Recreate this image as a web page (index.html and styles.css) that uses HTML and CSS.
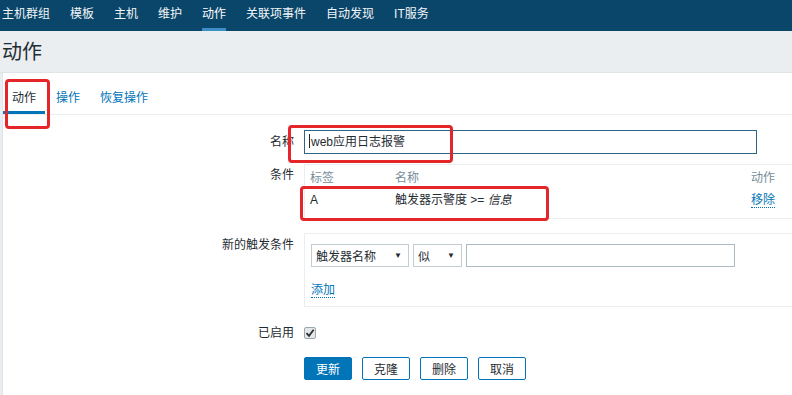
FILE: index.html
```html
<!DOCTYPE html>
<html lang="zh-CN">
<head>
    <meta charset="UTF-8">
    <meta name="viewport" content="width=device-width, initial-scale=1.0">
    <title>动作</title>
    <link rel="stylesheet" href="styles.css">
</head>
<body>

<!-- Sub navigation -->
<div class="subnav">
    <a href="#">主机群组</a>
    <a href="#">模板</a>
    <a href="#">主机</a>
    <a href="#">维护</a>
    <a href="#" class="active">动作</a>
    <a href="#">关联项事件</a>
    <a href="#">自动发现</a>
    <a href="#">IT服务</a>
</div>

<div class="header">
    <h1>动作</h1>
</div>

<div class="content">
    <div class="tabs">
        <a href="#" class="tab active">动作</a>
        <a href="#" class="tab">操作</a>
        <a href="#" class="tab">恢复操作</a>
    </div>

    <div class="form">
        <div class="form-row row-name">
            <label class="form-label">名称</label>
            <div class="form-field">
                <div class="text-input focused"><span class="caret"></span>web应用日志报警</div>
            </div>
        </div>

        <div class="form-row row-conditions">
            <label class="form-label">条件</label>
            <div class="form-field">
                <div class="box wide">
                    <table class="cond-table">
                        <thead>
                            <tr>
                                <th class="col-tag">标签</th>
                                <th>名称</th>
                                <th class="col-action">动作</th>
                            </tr>
                        </thead>
                        <tbody>
                            <tr>
                                <td>A</td>
                                <td>触发器示警度 &gt;= <em>信息</em></td>
                                <td><a href="#" class="link">移除</a></td>
                            </tr>
                        </tbody>
                    </table>
                </div>
            </div>
        </div>

        <div class="form-row row-new">
            <label class="form-label">新的触发条件</label>
            <div class="form-field">
                <div class="box wide new-box">
                    <div class="controls">
                        <div class="select select-type">触发器名称<span class="arrow">&#9660;</span></div>
                        <div class="select select-op">似<span class="arrow">&#9660;</span></div>
                        <div class="text-input value-input"></div>
                    </div>
                    <a href="#" class="link add-link">添加</a>
                </div>
            </div>
        </div>

        <div class="form-row row-enabled">
            <label class="form-label">已启用</label>
            <div class="form-field">
                <span class="checkbox">
                    <svg width="10" height="10" viewBox="0 0 10 10"><path d="M1.5 5.2 L4 7.8 L8.6 1.8" fill="none" stroke="#2b2f33" stroke-width="1.8"/></svg>
                </span>
            </div>
        </div>

        <div class="form-row row-buttons">
            <span class="form-label"></span>
            <div class="form-field buttons">
                <button class="btn primary">更新</button>
                <button class="btn">克隆</button>
                <button class="btn">删除</button>
                <button class="btn">取消</button>
            </div>
        </div>
    </div>
</div>

<!-- red annotation marks over the screenshot -->
<div class="mark mark-tab"></div>
<div class="mark mark-name"></div>
<div class="mark mark-cond"></div>

</body>
</html>
```

FILE: styles.css
```css
html, body {
    margin: 0;
    overflow: hidden;
}

body {
    font-family: "Liberation Sans", "Noto Sans CJK SC", sans-serif;
    font-size: 12px;
    color: #1f2c33;
    background-color: #ebeef0;
    position: relative;
    height: 395px;
}

a {
    text-decoration: none;
}

/* Sub navigation */
.subnav {
    display: flex;
    gap: 20px;
    height: 31px;
    padding-left: 2px;
    background-color: #0a466a;
}

.subnav a {
    color: #f2f6f8;
    line-height: 28px;
    border-bottom: 3px solid transparent;
}

.subnav a.active {
    color: #ffffff;
    border-bottom-color: #3b8ec6;
}

/* Page title */
.header {
    height: 41px;
    padding-left: 2px;
    border-bottom: 1px solid #dfe4e7;
}

.header h1 {
    margin: 0;
    font-size: 20px;
    font-weight: normal;
    line-height: 42px;
    color: #1f2c33;
}

/* White content block */
.content {
    margin-left: 2px;
    border-left: 1px solid #dfe4e7;
    background-color: #ffffff;
    height: 322px;
    overflow: hidden;
}

.tabs {
    display: flex;
    height: 41px;
    border-bottom: 1px solid #ebeef0;
}

.tab {
    padding: 17px 9px 5px;
    margin-right: 2px;
    line-height: 16px;
    color: #0275b8;
    border-bottom: 3px solid transparent;
}

.tab.active {
    color: #1f2c33;
    border-bottom-color: #0275b8;
}

/* Form */
.form {
    padding-top: 15px;
}

.form-row {
    display: grid;
    grid-template-columns: 291px 1fr;
    column-gap: 10px;
}

.form-label {
    text-align: right;
    line-height: 14px;
}

.row-name .form-label {
    line-height: 24px;
}

.row-conditions {
    margin-top: 10px;
}

.row-conditions .form-label {
    padding-top: 4px;
}

.row-new {
    margin-top: 14px;
}

.row-new .form-label {
    padding-top: 5px;
}

.row-enabled {
    margin-top: 20px;
}

.row-enabled .form-label {
    line-height: 12px;
}

.row-buttons {
    margin-top: 18px;
}

.text-input {
    box-sizing: border-box;
    height: 24px;
    border: 1px solid #acbbc2;
    background: #ffffff;
    line-height: 22px;
    padding-left: 4px;
}

.text-input.focused {
    width: 453px;
    border-color: #2f6587;
}

.caret {
    display: inline-block;
    width: 1px;
    height: 14px;
    margin-right: 1px;
    vertical-align: -2px;
    background: #1f2c33;
}

.box {
    border: 1px solid #ebeef0;
}

/* the boxes run past the right edge of the window */
.box.wide {
    margin-right: -4px;
}

/* Conditions table */
.cond-table {
    width: 100%;
    border-collapse: collapse;
    margin: 2px 0 7px;
}

.cond-table th,
.cond-table td {
    height: 22px;
    padding: 0 0 0 5px;
    text-align: left;
    font-weight: normal;
    line-height: 14px;
}

.cond-table th {
    color: #768d99;
}

.cond-table .col-tag {
    width: 80px;
}

.cond-table .col-action {
    width: 44px;
}

.cond-table em {
    font-style: italic;
}

.link {
    color: #0275b8;
    border-bottom: 1px dotted #0275b8;
}

/* New condition */
.new-box {
    padding: 10px 6px 8px;
}

.controls {
    display: flex;
    gap: 4px;
}

.select {
    box-sizing: border-box;
    display: flex;
    align-items: center;
    justify-content: space-between;
    height: 23px;
    padding: 0 6px 0 4px;
    border: 1px solid #c3ccd1;
    background: #ffffff;
}

.select-type {
    width: 98px;
}

.select-op {
    width: 49px;
}

.arrow {
    font-size: 8px;
    color: #1f2c33;
}

.value-input {
    width: 269px;
    height: 23px;
}

.add-link {
    display: inline-block;
    margin-top: 17px;
    line-height: 13px;
}

/* Enabled checkbox */
.checkbox {
    box-sizing: border-box;
    display: flex;
    align-items: center;
    justify-content: center;
    width: 12px;
    height: 12px;
    border: 1px solid #9aa7ae;
    border-radius: 2px;
    background: #e4e7e9;
}

/* Buttons */
.buttons {
    display: flex;
    gap: 10px;
}

.btn {
    height: 23px;
    padding: 0 11px;
    font-family: inherit;
    font-size: 12px;
    color: #1f2c33;
    background: #ffffff;
    border: 1px solid #0275b8;
    border-radius: 2px;
}

.btn.primary {
    color: #ffffff;
    background: #0275b8;
}

/* Red annotation boxes */
.mark {
    position: absolute;
    box-sizing: border-box;
    border: 3px solid #e4262b;
    border-radius: 4px;
}

.mark-tab {
    left: 5px;
    top: 79px;
    width: 45px;
    height: 50px;
}

.mark-name {
    left: 288px;
    top: 125px;
    width: 165px;
    height: 38px;
}

.mark-cond {
    left: 300px;
    top: 186px;
    width: 249px;
    height: 35px;
}
```
